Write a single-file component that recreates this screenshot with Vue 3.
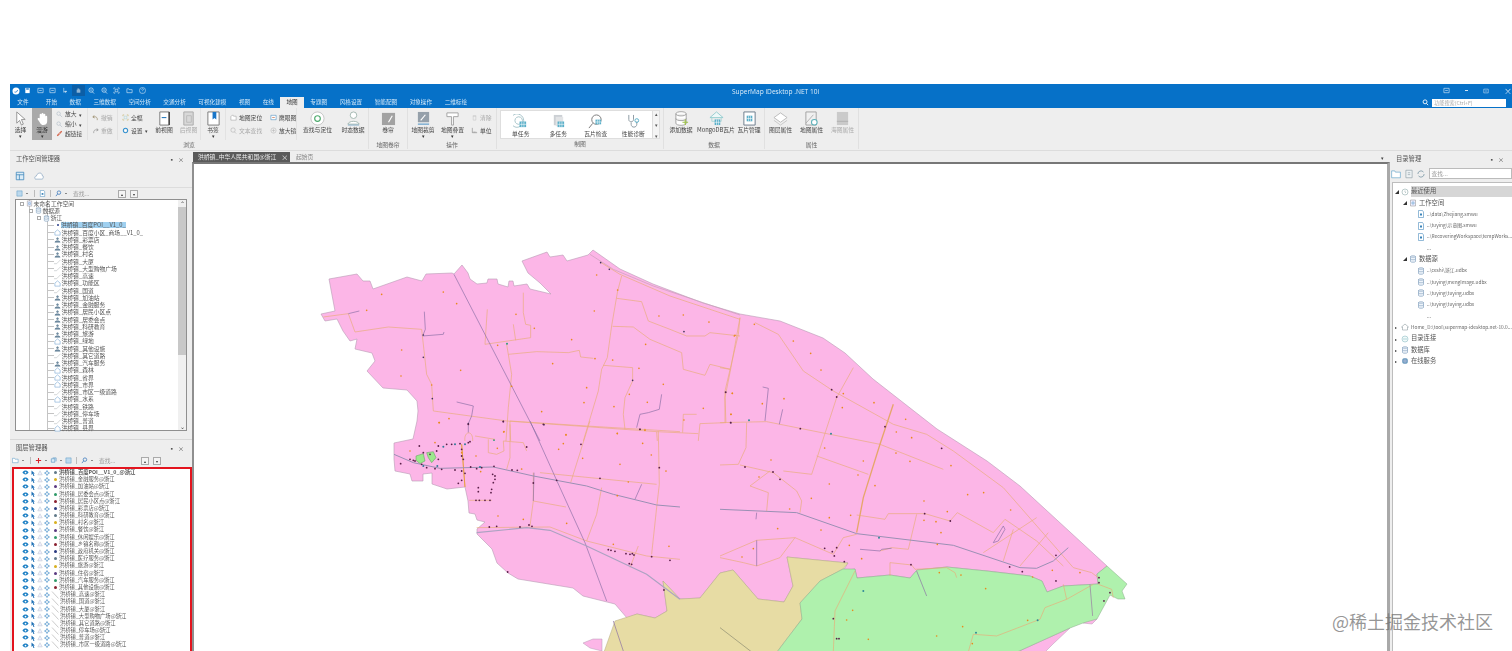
<script setup>
import { h } from 'vue';

const line = (d, stroke = '#777', w = 1, fill = 'none') => ({ d, stroke, 'stroke-width': w, fill });
const solid = (d, fill) => ({ d, fill });
// small teal tile grid used by the map-cache icons
const grid = (x, y, w, hh) => [
  solid(`M${x} ${y}h${w}v${hh}h-${w}z`, '#58aec8'),
  line(`M${x + w / 3} ${y}v${hh}M${x + (2 * w) / 3} ${y}v${hh}M${x} ${y + hh / 2}h${w}`, '#fff', 0.6),
];

// every icon is a short list of paths on a 16x16 grid
const icons = {
  select: [line('M4 1v12l3-3 2 5 2-1-2-5h4z', '#8a8a8a', 0.9, '#fff')],
  hand: [solid('M5 8V4a1 1 0 012 0V3a1 1 0 012 0v1a1 1 0 012 0v2a1 1 0 012 0v5c0 3-2 4-4 4s-3-1-4-3L3 9c-1-1 1-2 2-1z', '#fff')],
  zoomin: [line('M6 2a4 4 0 100 8 4 4 0 000-8zM9 9l5 5', '#9ab')],
  link: [line('M3 13l10-10', '#d0563a', 3), line('M6 10l4-4', '#fff', 1)],
  undo: [line('M5 3L2 7l4 2M2 7c6-2 11 0 10 7', '#8a7a50', 1.4)],
  redo: [line('M11 3l3 4-4 2M14 7C8 5 3 7 4 14', '#777', 1.2)],
  full: [line('M2 5V2h3M11 2h3v3M14 11v3h-3M5 14H2v-3', '#c8b26a', 1.3), line('M5 5h6v6H5z', '#9cc', 1)],
  gear: [line('M8 3a5 5 0 100 10A5 5 0 008 3z', '#2f8fcf', 2.4), solid('M8 6a2 2 0 100 4 2 2 0 000-4z', '#fff')],
  front: [line('M3 1h10v14H3z', '#777', 1, '#fff'), line('M5 7h5', '#2f7fc0', 1.2), line('M13 1v14', '#444', 1.6)],
  back: [line('M3 1h10v14H3z', '#aaa', 1, '#d8d8d8'), line('M6 5h5v7H6z', '#bbb', 1)],
  mark: [line('M2 1h12v14H2z', '#777', 1, '#fff'), solid('M7 1h4v8L9 7.5 7 9z', '#1976c8')],
  locate: [line('M2 6l4-4 2 3h6v9H2z', '#888', 1, '#fff')],
  eagle: [line('M2 3h12v10H2z', '#3a83b8', 1.2, '#fff'), line('M5 8h6', '#c05a30', 1.4)],
  find: [line('M7 2a5 5 0 100 10A5 5 0 007 2zM10 11l4 4', '#aaa', 1.2)],
  lens: [line('M8 2a6 6 0 100 12A6 6 0 008 2zM4 8h8M8 4v8', '#aaa', 1)],
  target: [line('M8 1a7 7 0 100 14A7 7 0 008 1z', '#c4c4c4', 1, '#fff'), line('M8 5a3 3 0 100 6 3 3 0 000-6z', '#4aa86a', 1.2)],
  person: [line('M8 1a3 3 0 100 7 3 3 0 000-7zM2 14c1-4 11-4 12 0z', '#9ab0a8', 0.9, '#fff'), line('M2 15h12', '#7aa8c8', 0.9)],
  curtain: [solid('M1 2h14v13H1z', '#a2a2a2'), line('M8 12l4-7', '#fff', 1.2)],
  clip: [solid('M2 1h12v11H2z', '#95a0aa'), line('M10 4l-5 6', '#fff', 1.2), line('M2 14h12', '#5a9ac8', 1.2)],
  over: [line('M2 2h12v4H9v9H7V6H2z', '#999', 0.9, '#fff')],
  clear: [line('M5 5h6v9H5zM4 4h8', '#bbb', 1)],
  unit: [line('M3 2v11h11', '#777', 1.2), line('M5 13v-3M8 13v-3M11 13v-3', '#777', 0.8)],
  single: [line('M8 1a7 7 0 100 12A7 7 0 008 1zM8 3.500a4 4 0 100 7 4 4 0 000-7z', '#9dbcc2', 0.9), ...grid(7, 8, 7, 6)],
  multi: [solid('M3 1h9v11H3z', '#ccd0d4'), solid('M5 3h8v10H5z', '#e2e4e6'), ...grid(7, 8, 7, 6)],
  check: [line('M9 1a5 5 0 100 10A5 5 0 009 1zM5 10l-4 5', '#777', 1), ...grid(8, 6, 6, 5)],
  pulse: [line('M3 1v5c0 3 5 3 5 0V1M5.500 9v2c0 4 6 4 6 0V8', '#8a98a0', 1), line('M11.500 5a2 2 0 100 4 2 2 0 000-4z', '#58aec8', 1)],
  addd: [line('M2 3c0-3 11-3 11 0v10c0 3-11 3-11 0zM2 3c0 3 11 3 11 0M2 8c0 3 11 3 11 0', '#999', 0.9, '#fff'), line('M12 9v6M9 12h6', '#9cc04a', 1.3)],
  mongo: [line('M8 1l7 6H1z', '#8cc8cc', 0.9, '#eef8f8'), line('M3 7h10v4H3z', '#a4d4d4', 0.9), ...grid(6, 9, 6, 6)],
  tile: [line('M2 1h12v14H2z', '#6a7a8a', 1, '#fff'), ...grid(5, 5, 6, 6)],
  layer: [line('M8 2l7 5-7 5-7-5z', '#b4b4b4', 0.9, '#fff'), line('M1 10l7 5 7-5', '#c4c4c4', 0.9)],
  mapa: [line('M2 1h11v14H2z', '#999', 0.9, '#f0f0f0'), line('M2 13l8-9', '#aaa', 0.9), line('M11 9a3 3 0 100 6 3 3 0 000-6z', '#5ab0b8', 1.1, '#fff')],
  chart: [solid('M2 1h12v14H2z', '#cacaca'), line('M2 11h12', '#b0b0b0', 1)],
  logo: [solid('M8 1a7 7 0 100 14A7 7 0 008 1z', '#fff'), line('M5 10c3 1 6-1 6-4', '#0f6fc6', 1.6)],
  save: [solid('M3 2h10v12H3z', '#fff'), solid('M5 3h6v3H5z', '#0f6fc6')],
  box: [line('M2 3h12v10H2zM5 8h6', '#fff', 1.2)],
  cursor: [line('M4 2v10l3-2 2 4M7 10h4z', '#fff', 1.2)],
  handw: [line('M5 13V6m2 7V3m2 10V4m2 9V6', '#fff', 1.3)],
  zoomw: [line('M7 2a5 5 0 100 10A5 5 0 007 2zM10 11l4 4M5 7h4', '#fff', 1.4)],
  fullw: [line('M2 5V2h3M11 2h3v3M14 11v3h-3M5 14H2v-3M5 5h6v6H5z', '#fff', 1.2)],
  folderw: [line('M2 4h4l1 2h7v7H2z', '#fff', 1.2)],
  help: [line('M8 1a7 7 0 100 14A7 7 0 008 1zM6 6c0-3 5-3 4 0-.5 1.500-2 1.500-2 3M8 11v1', '#fff', 1.1)],
  search: [line('M7 2a4.500 4.500 0 100 9 4.500 4.500 0 000-9zM10 10l4 4', '#fff', 2)],
  table: [line('M2 2h12v12H2zM2 6h12M7 6v8', '#3a83b8', 1.2, '#dcecf6')],
  cloud: [line('M3 13c-3 0-2-5 1-5 0-5 9-7 9-1 3 0 2 6 0 6z', '#7a9ab8', 1, '#fff')],
  open: [line('M1 3h5l1 2h7v8H1z', '#4a90c0', 1.1, '#fff')],
  wsp: [line('M3 2h10v12H3z', '#8a8a8a', 1, '#eef'), line('M6 6h4v4H6z', '#4a90c0', 1)],
  mag: [line('M9 2a4 4 0 100 8 4 4 0 000-8zM6 9l-4 5', '#2a6db8', 1.6)],
  blueb: [line('M2 2h12v12H2z', '#4a90c0', 1, '#bcd9ee')],
  plus: [line('M8 2v12M2 8h12', '#d8232a', 2.4)],
  cube: [line('M3 4h8v8H3zM6 2h8v8', '#3a83b8', 1.2, '#dcecf6')],
  refresh: [line('M3 8a5 5 0 019-3M13 8a5 5 0 01-9 3', '#6a8a9a', 1.1)],
  folder: [line('M1 3h5l1 2h8v9H1z', '#5aa0c8', 1, '#fff')],
  note: [line('M3 2h10v12H3zM6 6h4M6 9h4', '#8a9aa4', 1, '#eef2f4')],
  clock: [line('M8 2a6 6 0 100 12A6 6 0 008 2zM8 5v3l2 2', '#7a9a9a', 1, '#fff')],
  smwu: [line('M3 1h8l2 3v11H3z', '#3a83b8', 1.1, '#fff'), solid('M6 7h4v4H6z', '#3a83b8')],
  db: [line('M3 3c0-2 10-2 10 0v10c0 2-10 2-10 0zM3 3c0 2 10 2 10 0M3 8c0 2 10 2 10 0', '#6a8eb0', 1.1, '#eef4fa')],
  home: [line('M8 2L1 8h2v6h10V8h2z', '#7a8a90', 1, '#fff')],
  chain: [line('M8 2a6 6 0 100 12A6 6 0 008 2z', '#7ab0b8', 1, '#f0fafa'), line('M4 8h8', '#7ab0b8', 1)],
  globe: [solid('M8 2a6 6 0 100 12A6 6 0 008 2z', '#6f9fc0'), line('M8 2v12M2 8h12', '#dce', 0.8)],
  eye: [solid('M1 8c4-6 10-6 14 0-4 6-10 6-14 0z', '#1c7fc4'), solid('M8 6a2 2 0 100 4 2 2 0 000-4z', '#fff')],
  arrow: [solid('M4 1l9 8H9l3 6-3 1-2-6-3 3z', '#1c6fb4')],
  tri: [line('M8 2l6 11H2z', '#b8c0c4', 1.2, '#eef')],
  cog: [line('M8 4a4 4 0 100 8 4 4 0 000-8zM8 0v4M8 12v4M0 8h4M12 8h4', '#2a7fc0', 1.5)],
  region: [line('M8 2l6 5v7H2V7z', '#5a94c8', 1.1, '#fff')],
  lineds: [line('M0 13h6l9-9', '#a0a8ac', 1)],
  ptds: [line('M8 4a2 2 0 100 4 2 2 0 000-4zM2 14c1-4 11-4 12 0z', '#5a7a90', 1.4, '#7a94a8')],
  slash: [line('M2 1l13 14', '#8a8a8a', 0.9)],
};

const Ico = (props) =>
  h('svg', { viewBox: '0 0 16 16', width: props.s, height: props.s, class: 'ico' }, icons[props.n].map((p) => h('path', p)));
Ico.props = ['n', 's'];

const qat = ['save', 'box', 'box', 'cursor', 'handw', 'zoomw', 'zoomw', 'fullw', 'folderw', 'help'];
const tabs = ['开始', '数据', '三维数据', '空间分析', '交通分析', '可视化建模', '视图', '在线', '地图', '专题图', '风格设置', '智能配图', '对象操作', '二维标绘'];

const large = (label, icon, w, extra = {}) => ({ kind: 'large', label, icon, w, ...extra });
const stack = (w, rows, extra = {}) => ({ kind: 'stack', w, rows, ...extra });
const row = (label, icon, gray = false, tail = '') => ({ label, icon, gray, tail });

const groups = [
  {
    name: '浏览', w: 359,
    items: [
      large('选择', 'select', 21, { arrow: true }),
      large('漫游', 'hand', 20, { on: true, arrow: true }),
      stack(36, [row('放大', 'zoomin', false, '▾'), row('缩小', 'zoomin', false, '▾'), row('超链接', 'link')], { line: true }),
      stack(30, [row('撤销', 'undo', true), row('重做', 'redo', true)], { line: true }),
      stack(33, [row('全幅', 'full'), row('设置', 'gear', false, '▾')]),
      large('前视图', 'front', 26),
      large('后视图', 'back', 24, { gray: true, line: true }),
      large('书签', 'mark', 25, { arrow: true, line: true }),
      stack(40, [row('地图定位', 'locate'), row('文本查找', 'find', true)]),
      stack(31, [row('鹰眼图', 'eagle'), row('放大镜', 'lens')], { line: true }),
      large('查找与定位', 'target', 41),
      large('时态数据', 'person', 30),
    ],
  },
  { name: '地图卷帘', w: 39, items: [large('卷帘', 'curtain', 38)] },
  {
    name: '操作', w: 89,
    items: [
      large('地图裁剪', 'clip', 30, { arrow: true }),
      large('地图叠置', 'over', 29, { arrow: true }),
      stack(29, [row('清除', 'clear', true), row('单位', 'unit')]),
    ],
  },
  { name: '数据', w: 101, at: 'late', items: [large('添加数据', 'addd', 34), large('MongoDB瓦片', 'mongo', 36), large('瓦片管理', 'tile', 30)] },
  { name: '属性', w: 94, at: 'late', items: [large('图层属性', 'layer', 31), large('地图属性', 'mapa', 31), large('海图属性', 'chart', 31, { gray: true })] },
];
const earlyGroups = groups.filter((g) => !g.at);
const lateGroups = groups.filter((g) => g.at);
const gallery = [
  { label: '单任务', icon: 'single' },
  { label: '多任务', icon: 'multi' },
  { label: '瓦片检查', icon: 'check' },
  { label: '性能诊断', icon: 'pulse' },
];

const P = 'ptds';
const R = 'region';
const L = 'lineds';
const datasets = [
  ['百度POI__V1_0_', 'dot'], ['百度小区_商场__V1_0_', R], ['彩票店', P], ['餐饮', P], ['村名', P], ['大厦', L],
  ['大型购物广场', L], ['高速', L], ['功能区', R], ['国道', L], ['加油站', P], ['金融服务', P], ['居民小区点', P],
  ['居委会点', P], ['科研教育', P], ['旅游', P], ['绿地', R], ['其他设施', P], ['其它道路', L], ['汽车服务', P],
  ['森林', R], ['省界', R], ['市界', R], ['市区一级道路', L], ['水系', R], ['铁路', L], ['停车场', L], ['普道', L], ['县界', R],
];

const y = '#d8b020';
const v = '#5a3a80';
const g = '#2f9a68';
const r = '#8a2030';
const n = '#2a3a80';
const s = '#607888';
const layers = [
  ['百度POI__V1_0_', s], ['金融服务', y], ['加油站', v], ['居委会点', g], ['居民小区点', r], ['彩票店', n], ['科研教育', s],
  ['村名', y], ['餐饮', v], ['休闲娱乐', g], ['乡镇名称', r], ['政府机关', n], ['医疗服务', s], ['旅游', y], ['住宿', v],
  ['汽车服务', g], ['其他设施', r], ['高速', ''], ['国道', ''], ['大厦', ''], ['大型购物广场', ''], ['其它道路', ''],
  ['停车场', ''], ['普道', ''], ['市区一级道路', ''],
];

const catalog = [
  { text: '最近使用', icon: 'clock', lv: 'l0', open: true, sel: true, big: true },
  { text: '工作空间', icon: 'wsp', lv: 'l1', open: true, big: true },
  { text: '..\\data\\Zhejiang.smwu', icon: 'smwu', lv: 'l2' },
  { text: '..\\tuying\\示意图.smwu', icon: 'smwu', lv: 'l2' },
  { text: '..\\RecoveringWorkspace\\tempWorks...', icon: 'smwu', lv: 'l2' },
  { text: '...', lv: 'l3' },
  { text: '数据源', icon: 'db', lv: 'l1', open: true, big: true },
  { text: '..\\ceshi\\浙江.udbx', icon: 'db', lv: 'l2' },
  { text: '..\\tuying\\mengImage.udbx', icon: 'db', lv: 'l2' },
  { text: '..\\tuying\\tuying.udbx', icon: 'db', lv: 'l2' },
  { text: '..\\tuying\\tuying.udbx', icon: 'db', lv: 'l2' },
  { text: '...', lv: 'l3' },
  { text: 'Home_D:\\tool\\supermap-idesktop.net-10.0...', icon: 'home', lv: 'l0', shut: true },
  { text: '目录连接', icon: 'chain', lv: 'l0', shut: true, big: true },
  { text: '数据库', icon: 'db', lv: 'l0', shut: true, big: true },
  { text: '在线服务', icon: 'globe', lv: 'l0', shut: true, big: true },
];

// map geometry, in page pixels
const pink = '329,278 357,273 363,280 370,280 373,288 407,276 422,280 426,273 452,272 454,273 462,264 468,272 470,278 477,283 487,282 488,278 497,278 498,283 508,286 509,280 513,280 514,285 527,283 530,288 551,293 540,282 528,272 522,260 547,251 550,256 563,254 567,260 588,254 593,249 620,268 653,283 703,302 740,313 780,320 823,337 845,352 873,378 937,428 987,460 1020,485 1107,565 1097,573 1098,583 1063,585 1047,591 1042,580 1030,575 987,570 947,566 917,569 910,577 890,574 857,577 855,568 843,570 848,562 787,556 793,585 784,601 758,598 733,569 720,572 712,582 700,597 680,598 663,580 667,610 655,617 637,613 627,617 615,603 583,595 573,587 518,578 508,572 497,562 492,548 477,533 477,528 485,521 477,519 475,513 469,512 468,500 465,486 447,488 432,483 432,472 423,473 423,480 412,480 410,473 395,470 394,458 394,442 413,438 417,420 418,410 417,400 407,389 383,387 367,370 375,360 372,352 355,348 357,338 350,340 343,330 337,318 325,320 321,313 335,310';
const pinkBits = [
  '583,642 593,638 602,638 602,650 590,647',
  '720,577 730,579 723,605 710,605',
  '1017,651 1070,627 1053,643 1045,651',
  '1093,615 1097,618 1092,623 1083,622',
  '802,618 793,640 785,643',
];
const yellow = '787,556 793,585 784,601 758,598 733,569 720,572 712,582 700,597 680,598 663,580 667,610 655,617 637,613 615,620 604,651 777,651 783,643 802,618 800,602 820,580 843,568 848,562';
const green = '843,568 855,568 857,577 890,574 910,577 917,569 947,566 987,570 1030,575 1042,580 1047,591 1063,585 1098,583 1097,573 1107,565 1127,583 1122,590 1125,598 1118,598 1110,594 1097,618 1083,622 1070,627 1017,651 777,651 783,643 802,618 800,602 820,580';

const topRoads = 'M10,228L85,218 105,273 205,258 305,265 320,400 335,430 340,510 560,540 1010,572 1135,578M905,105L893,150 875,255 862,350 845,385 835,450 790,600M890,172L965,182 985,240 1050,265 1100,285 1155,285 1170,275 1260,285M878,256L940,258 990,295 1085,335 1090,385 1155,403 1170,370 1232,385M1260,230L1232,385 1215,470 1218,545 1140,548 1135,600M850,373L938,380 938,420 915,470 910,520 915,565M565,340L650,332 745,335 778,328 782,348 820,352M560,310L575,400 565,500 558,600M610,155L610,215 617,250 632,253 632,290 495,310 502,205M580,250L587,298M1090,520L1130,520M1090,520L1088,575M1010,572L1012,600M570,550L572,600M840,63L900,100 1050,165 1260,235';
const topPurple = 'M85,218L118,210M313,212L316,265 308,285 370,280 372,273M410,483L460,495 455,525 445,548 445,575M1025,460L1018,505 985,515 960,520 950,560M402,100L660,600';
const topDark = [[842, 65], [868, 85], [310, 282], [310, 349], [337, 473], [445, 548], [550, 541], [672, 551], [938, 418], [960, 565], [1217, 453], [1233, 545], [1092, 272]];
const topOrange = [[185, 160], [370, 153], [410, 188], [140, 208], [245, 327], [243, 405], [422, 388], [588, 220], [643, 262], [533, 313], [575, 436], [698, 368], [755, 296], [823, 210], [830, 102], [893, 147], [825, 353], [878, 357], [957, 382], [977, 310], [1017, 225], [1090, 222], [1167, 243], [1243, 285], [1030, 430], [800, 440], [792, 485], [882, 497], [928, 460], [982, 484], [1150, 502], [1092, 537], [1233, 520], [1237, 457], [665, 512], [357, 545], [387, 533], [551, 573], [738, 581], [892, 577], [975, 566], [335, 432]];
const topTeal = [[561, 308], [522, 597]];

const midRoads = 'M268,238L335,238M245,70L255,198M390,0L390,110 380,145M390,0L620,15 900,32M480,155L830,190M460,155L460,240 450,315M460,240L558,258M630,0L572,185M665,200L650,280 620,360M835,30L838,190 830,260 815,400M290,320L510,318 620,360 800,405 900,415M775,375L750,440M325,55L325,95 350,100 372,90 370,60 430,65 440,90M285,45L345,55M255,60C250,30 280,25 278,60';
const midPurple = 'M462,155L460,240M785,190L765,235M700,600L730,690M450,0L530,178 615,365 680,540';
const midDark = [[62, 128], [90, 115], [118, 75], [175, 75], [200, 70], [215, 70], [240, 68], [265, 65], [270, 62], [245, 85], [245, 105], [250, 115], [170, 90], [175, 115], [140, 140], [165, 143], [185, 145], [225, 147], [272, 138], [290, 143], [305, 140], [342, 136], [396, 147], [412, 148], [245, 150], [255, 157], [245, 178], [235, 187], [295, 200], [295, 212], [288, 238], [298, 238], [315, 238], [330, 238], [333, 215], [335, 205], [340, 185], [345, 175], [345, 165], [338, 160], [460, 186], [440, 78], [603, 70], [530, 178], [660, 172], [838, 140], [328, 318], [350, 316], [420, 318], [447, 312], [456, 316], [685, 386], [693, 388], [705, 391], [738, 398], [750, 400], [757, 398], [762, 402], [815, 407], [870, 418], [748, 428], [755, 430], [383, 453], [852, 507], [265, 10], [370, 2], [490, 10], [780, 25], [150, 100], [130, 95], [105, 120], [125, 130], [100, 118]];
const midOrange = [[178, 5], [372, 32], [352, 82], [288, 105], [165, 65], [90, 90], [558, 42], [550, 68], [536, 85], [608, 112], [712, 38], [788, 67], [814, 102], [720, 130], [858, 150], [745, 183], [712, 224], [700, 370], [867, 376], [560, 307], [430, 295], [354, 285], [795, 28], [425, 144], [245, 95], [302, 152]];
const midTeal = [[190, 77], [225, 70], [255, 70], [300, 138], [172, 135], [130, 135]];

const lowRoads = 'M60,80L55,130 15,300 15,395M0,230L30,235M0,395L140,392 480,460 670,535M105,95L175,130 250,240 340,300 520,400 620,430 700,480 850,590 1060,830 1115,845 1135,860M400,230L350,320 275,550 190,540M290,495L445,550M80,395L78,470 55,520 0,522M60,522L160,545 230,600 245,630 240,665M150,540L90,585 145,605 140,660M410,672L495,685 505,668 615,668 690,690 712,665 820,725 855,685 950,750 1030,825M590,670L565,775 515,770 480,780M0,795L110,748 225,740 340,790M110,825L180,800 225,740M0,800L70,815 110,825M410,730L370,740 340,790M950,680L790,785M985,725L900,825M880,715L850,810M405,840L345,960 340,1083M1040,925L1030,880M1120,880L1040,925 975,950 960,985 830,1035 760,1030 745,1083M510,855L510,815 575,822 585,835 680,830 705,845 710,860M1135,880L1175,895 1180,920';
const lowWide = 'M520,340L480,460 430,620 410,725';
const lowPurple = 'M128,288L145,292 135,390M188,355L178,400M820,755L850,705 855,715 835,750ZM420,775L480,780 485,775 515,772M110,665L108,685M110,748L110,825M590,840L620,915';
const lowDark = [[335, 296], [350, 318], [17, 304], [32, 395], [241, 413], [75, 528], [159, 543], [180, 565], [495, 407], [665, 472], [614, 668], [691, 690], [573, 821], [314, 772], [337, 782], [350, 770], [343, 795], [373, 812], [1008, 793], [1008, 870], [907, 842], [869, 828], [1137, 860], [1137, 875], [1170, 905], [1152, 930], [340, 983], [350, 1043], [357, 1043]];
const lowOrange = [[103, 100], [45, 133], [220, 150], [272, 187], [303, 237], [192, 323], [127, 338], [37, 307], [33, 370], [370, 308], [367, 350], [462, 335], [557, 385], [529, 423], [575, 440], [528, 486], [570, 511], [430, 510], [314, 471], [414, 552], [328, 579], [153, 507], [117, 558], [274, 622], [209, 654], [328, 680], [392, 673], [303, 717], [173, 713], [100, 773], [66, 798], [388, 763], [425, 803], [465, 584], [612, 630], [612, 688], [648, 692], [682, 662], [663, 725], [652, 760], [743, 611], [791, 605], [693, 524], [872, 657], [997, 838], [938, 858], [1080, 845], [658, 845], [723, 852], [797, 893], [398, 958], [380, 987], [445, 1045], [728, 1007], [650, 1035], [757, 1058], [923, 988]];
const lowTeal = [[87, 388], [333, 428], [477, 740], [430, 900], [768, 1025], [953, 988]];
</script>

<template>
  <div class="page">
    <div class="window">
      <div class="titlebar">
        <div class="qat">
          <Ico n="logo" :s="8" class="logo" />
          <span v-for="(q, i) in qat" :key="i" class="qat-btn" :class="{ dim: i === 4 }"><Ico :n="q" :s="7" /></span>
        </div>
        <div class="app-title">SuperMap iDesktop .NET 10i</div>
        <div class="win-btns">
          <Ico n="box" :s="7" />
          <span class="minus"></span>
          <Ico n="box" :s="6" />
          <span class="close">×</span>
        </div>
      </div>

      <div class="tabs">
        <span class="tab file">文件</span>
        <span v-for="t in tabs" :key="t" class="tab" :class="{ active: t === '地图' }">{{ t }}</span>
        <div class="func-search">
          <Ico n="search" :s="7" />
          <span class="func-input">功能搜索(Ctrl+F)</span>
        </div>
      </div>

      <div class="ribbon">
        <div v-for="grp in earlyGroups" :key="grp.name" class="group" :style="{ width: grp.w + 'px' }">
          <div class="group-items">
            <template v-for="(it, i) in grp.items" :key="i">
              <div v-if="it.kind === 'large'" class="large" :class="{ on: it.on, gray: it.gray, line: it.line }" :style="{ width: it.w + 'px' }">
                <Ico :n="it.icon" :s="15" />
                <span class="large-label">{{ it.label }}</span>
                <span v-if="it.arrow" class="drop">▾</span>
              </div>
              <div v-else class="stack" :class="{ line: it.line }" :style="{ width: it.w + 'px' }">
                <div v-for="rw in it.rows" :key="rw.label" class="small" :class="{ gray: rw.gray }">
                  <Ico :n="rw.icon" :s="7" />
                  <span>{{ rw.label }}</span>
                  <span v-if="rw.tail" class="tail">{{ rw.tail }}</span>
                </div>
              </div>
            </template>
          </div>
          <div class="group-name">{{ grp.name }}</div>
        </div>

        <div class="group gallery-group">
          <div class="gallery">
            <div v-for="gi in gallery" :key="gi.label" class="gallery-item">
              <Ico :n="gi.icon" :s="15" />
              <span>{{ gi.label }}</span>
            </div>
            <div class="gallery-scroll"><i>▴</i><i>▾</i><i>▾</i></div>
          </div>
          <div class="group-name">制图</div>
        </div>

        <div v-for="grp in lateGroups" :key="grp.name" class="group" :style="{ width: grp.w + 'px' }">
          <div class="group-items">
            <div v-for="it in grp.items" :key="it.label" class="large" :class="{ gray: it.gray }" :style="{ width: it.w + 'px' }">
              <Ico :n="it.icon" :s="15" />
              <span class="large-label">{{ it.label }}</span>
            </div>
          </div>
          <div class="group-name">{{ grp.name }}</div>
        </div>
      </div>

      <div class="workspace">
        <div class="left-col">
          <section class="panel ws-panel">
            <div class="panel-head"><span>工作空间管理器</span><span class="pin">▪ ×</span></div>
            <div class="subtabs"><Ico n="table" :s="10" /><Ico n="cloud" :s="10" /></div>
            <div class="toolbar ws-bar">
              <Ico n="blueb" :s="7" /><i class="tb-drop">▪</i><b class="tb-sep"></b>
              <Ico n="smwu" :s="7" /><b class="tb-sep"></b>
              <Ico n="mag" :s="7" /><i class="tb-drop">▪</i>
              <span class="find-text">查找...</span>
              <span class="nav first">▴</span><span class="nav">▾</span>
            </div>
            <div class="tree">
              <div class="tree-rows">
                <div class="row r0"><i class="minus-box"></i><Ico n="wsp" :s="7" /><span>未命名工作空间</span></div>
                <div class="row r1"><i class="minus-box"></i><Ico n="db" :s="7" /><span>数据源</span></div>
                <div class="row r2"><i class="minus-box"></i><Ico n="db" :s="7" /><span>浙江</span></div>
                <div v-for="(d, i) in datasets" :key="d[0]" class="row r3">
                  <i v-if="d[1] === 'dot'" class="sel-dot"></i>
                  <Ico v-else :n="d[1]" :s="7" />
                  <span :class="{ picked: i === 0 }">洪桥镇_{{ d[0] }}</span>
                </div>
              </div>
              <div class="scroll">
                <span class="scroll-btn">⌃</span>
                <div class="thumb"></div>
                <span class="scroll-btn end">⌄</span>
              </div>
            </div>
          </section>

          <section class="panel layer-panel">
            <div class="panel-head"><span>图层管理器</span><span class="pin">▪ ×</span></div>
            <div class="toolbar layer-bar">
              <Ico n="open" :s="7" /><i class="tb-drop">▪</i><b class="tb-sep"></b>
              <Ico n="plus" :s="7" /><i class="tb-drop">▪</i>
              <Ico n="cube" :s="7" /><i class="tb-drop">▪</i>
              <Ico n="blueb" :s="7" /><b class="tb-sep"></b>
              <Ico n="mag" :s="7" /><i class="tb-drop">▪</i>
              <span class="find-text">查找...</span>
              <span class="nav first">▴</span><span class="nav">▾</span>
            </div>
            <div class="layer-list">
              <div v-for="(l, i) in layers" :key="l[0]" class="layer-row">
                <Ico n="eye" :s="7" />
                <Ico n="arrow" :s="6" />
                <Ico n="tri" :s="6" />
                <Ico n="cog" :s="6" />
                <i v-if="l[1]" class="pt" :style="{ background: l[1] }"></i>
                <Ico v-else n="slash" :s="8" class="ln" />
                <span :class="{ strong: i === 0 }">洪桥镇_{{ l[0] }}@浙江</span>
              </div>
            </div>
          </section>
        </div>

        <div class="doc-col">
          <div class="doc-tabs">
            <span class="doc-tab">洪桥镇_中华人民共和国@浙江<em>×</em></span>
            <span class="doc-tab2">起始页</span>
            <span class="doc-menu">▾</span>
          </div>
          <div class="map">
            <svg class="map-svg" width="1193" height="488" viewBox="194 163 1193 488">
              <polygon :points="pink" fill="#fcb6e7" stroke="#b79ab4" stroke-width=".6" />
              <polygon v-for="b in pinkBits" :key="b" :points="b" fill="#fcb6e7" stroke="#b79ab4" stroke-width=".5" />
              <polygon :points="yellow" fill="#e7dca4" stroke="#b4aa80" stroke-width=".5" />
              <polygon :points="green" fill="#aff1ad" stroke="#8aaa8a" stroke-width=".5" />

              <g fill="none" transform="translate(320 240) scale(.3333)">
                <path d="M810,40L880,85 1000,135 1260,222" stroke="#c8a0b8" stroke-width="2" />
                <path :d="topRoads" stroke="#e8ac78" stroke-width="2" />
                <path :d="topPurple" stroke="#8a6ea4" stroke-width="2" />
                <circle v-for="p in topOrange" :key="p.join()" :cx="p[0]" :cy="p[1]" r="2.500" fill="#e88a1a" />
                <circle v-for="p in topDark" :key="p.join()" :cx="p[0]" :cy="p[1]" r="2.500" fill="#40305a" />
                <circle v-for="p in topTeal" :key="p.join()" :cx="p[0]" :cy="p[1]" r="3" fill="#2f9a78" />
              </g>

              <g fill="none" transform="translate(380 420) scale(.3333)">
                <path d="M108,105L130,98 135,120 120,128 108,118ZM140,95L160,92 168,110 155,125 145,110Z" fill="#9ce88c" stroke="#5a9a5a" stroke-width="1.500" />
                <path :d="midRoads" stroke="#e8ac78" stroke-width="2" />
                <path d="M245,70L255,198" stroke="#e6a040" stroke-width="3" />
                <path :d="midPurple" stroke="#8a6ea4" stroke-width="2" />
                <path d="M42,100L100,125 180,142 340,138 460,165 620,195 700,220 830,252 900,258" stroke="#9a90b4" stroke-width="3" />
                <path d="M290,335L440,320 510,328 620,375 800,460 900,535" stroke="#aca2c2" stroke-width="3.500" />
                <circle v-for="p in midOrange" :key="p.join()" :cx="p[0]" :cy="p[1]" r="2.500" fill="#e88a1a" />
                <circle v-for="p in midDark" :key="p.join()" :cx="p[0]" :cy="p[1]" r="2.700" fill="#5a1f48" />
                <circle v-for="p in midTeal" :key="p.join()" :cx="p[0]" :cy="p[1]" r="3" fill="#2f7a98" />
              </g>

              <g fill="none" transform="translate(720 290) scale(.3333)">
                <path :d="lowRoads" stroke="#e8ac78" stroke-width="2" />
                <path :d="lowWide" stroke="#e6a66a" stroke-width="4" />
                <path :d="lowPurple" stroke="#8a6ea4" stroke-width="2" />
                <path d="M0,1010L95,1083" stroke="#8a8a70" stroke-width="2" />
                <path d="M0,655L230,665 410,728 700,763 900,830 950,832 1000,810 1045,770" stroke="#9a90b4" stroke-width="3" />
                <path d="M1110,880L1118,975" stroke="#a0a0a6" stroke-width="3" />
                <circle v-for="p in lowOrange" :key="p.join()" :cx="p[0]" :cy="p[1]" r="2.500" fill="#e88a1a" />
                <circle v-for="p in lowDark" :key="p.join()" :cx="p[0]" :cy="p[1]" r="2.700" fill="#5a1f48" />
                <circle v-for="p in lowTeal" :key="p.join()" :cx="p[0]" :cy="p[1]" r="3" fill="#2f8a98" />
              </g>
            </svg>
          </div>
        </div>

        <section class="panel right-panel">
          <div class="panel-head"><span>目录管理</span><span class="pin">▪ ×</span></div>
          <div class="cat-bar">
            <Ico n="folder" :s="10" />
            <Ico n="note" :s="10" />
            <Ico n="refresh" :s="10" />
            <span class="cat-find">查找...</span>
          </div>
          <div class="catalog">
            <div v-for="(c, i) in catalog" :key="i" class="cat-row" :class="c.lv">
              <i class="caret">{{ c.open ? '◢' : c.shut ? '▸' : '' }}</i>
              <Ico v-if="c.icon" :n="c.icon" :s="8" />
              <span :class="{ selected: c.sel, big: c.big }">{{ c.text }}</span>
            </div>
          </div>
        </section>
      </div>
    </div>
    <div class="watermark">@稀土掘金技术社区</div>
  </div>
</template>

<style scoped>
.page {
  position: relative;
  width: 1512px;
  height: 651px;
  overflow: hidden;
  padding: 84px 0 0 10px;
  box-sizing: border-box;
  background: #fff;
  font-family: "Noto Sans CJK SC", "Liberation Sans", sans-serif;
  color: #444;
  font-size: 5.8px;
  line-height: 1;
}
.window {
  width: 1502px;
  height: 567px;
  display: flex;
  flex-direction: column;
  filter: blur(0.25px);
}
.ico {
  display: block;
  flex: none;
}

/* title bar */
.titlebar {
  height: 13px;
  background: #0671c8;
  display: flex;
  align-items: center;
  position: relative;
  color: #fff;
}
.qat {
  display: flex;
  align-items: center;
  padding-left: 2px;
}
.logo {
  margin-right: 1px;
}
.qat-btn {
  width: 12.800px;
  height: 11px;
  display: flex;
  align-items: center;
  justify-content: center;
}
.qat-btn.dim {
  background: #0c5ea6;
}
.app-title {
  position: absolute;
  left: 722px;
  top: 3px;
  font: 6.600px "Open Sans", "Liberation Sans", sans-serif;
  color: #dcecf8;
}
.win-btns {
  margin-left: auto;
  display: flex;
  align-items: center;
  gap: 15px;
  width: 69px;
  color: #cfe4f5;
}
.minus {
  width: 5px;
  height: 1px;
  background: #cfe4f5;
}
.close {
  font-size: 8px;
}

/* tabs */
.tabs {
  height: 11px;
  background: #0671c8;
  display: flex;
  padding-left: 1px;
  color: #d4e8f8;
  align-items: stretch;
}
.tab {
  padding: 0 6.300px;
  display: flex;
  align-items: center;
  font-size: 5.600px;
}
.tab.file {
  padding-right: 11px;
}
.tab.active {
  background: #eeeeee;
  color: #333;
}
.func-search {
  margin-left: auto;
  display: flex;
  align-items: center;
  gap: 3px;
  padding-right: 6px;
}
.func-input {
  width: 74px;
  height: 8px;
  background: #fff;
  color: #aaa;
  font-size: 5.200px;
  display: flex;
  align-items: center;
  padding-left: 2px;
  box-sizing: border-box;
}

/* ribbon */
.ribbon {
  height: 43px;
  background: #eeeeee;
  display: flex;
  flex: none;
  border-bottom: 1px solid #dcdcdc;
  box-sizing: border-box;
}
.group {
  flex: none;
  height: 41px;
  display: flex;
  flex-direction: column;
  border-right: 1px solid #e0e0e0;
  box-sizing: border-box;
}
.group-items {
  display: flex;
  height: 32px;
}
.group-name {
  text-align: center;
  margin-top: 1px;
  color: #666;
  height: 7px;
  line-height: 7px;
}
.large {
  flex: none;
  display: flex;
  flex-direction: column;
  align-items: center;
  padding-top: 3px;
  box-sizing: border-box;
  position: relative;
}
.large-label {
  margin-top: 0.500px;
  white-space: nowrap;
}
.large.on {
  background: #a9a9a9;
  margin: 0 0 0 1px;
  color: #333;
}
.large.gray,
.small.gray {
  color: #aaa;
}
.line {
  border-right: 1px solid #e2e2e2;
}
.drop {
  font-size: 5px;
  margin-top: 1px;
  color: #333;
}
.stack {
  flex: none;
  display: flex;
  flex-direction: column;
  justify-content: space-evenly;
  padding-left: 4px;
  box-sizing: border-box;
}
.small {
  display: flex;
  align-items: center;
  gap: 2px;
  white-space: nowrap;
}
.tail {
  font-size: 5px;
}
.gallery-group {
  width: 167px;
}
.gallery {
  margin: 2px 3px 0;
  height: 29px;
  background: #fff;
  border: 1px solid #dedede;
  box-sizing: border-box;
  display: flex;
  padding-left: 1px;
}
.gallery-item {
  width: 38px;
  display: flex;
  flex-direction: column;
  align-items: center;
  padding-top: 3px;
  gap: 2px;
  box-sizing: border-box;
  white-space: nowrap;
}
.gallery-scroll {
  margin-left: auto;
  width: 6px;
  display: flex;
  flex-direction: column;
  justify-content: space-between;
  background: #f4f4f4;
  border-left: 1px solid #ddd;
  font-size: 5px;
  color: #555;
  align-items: center;
}
.gallery-scroll i {
  font-style: normal;
}

/* panels */
.workspace {
  display: flex;
  flex: 1;
  min-height: 0;
  background: #eeeeee;
}
.left-col {
  width: 182px;
  flex: none;
  display: flex;
  flex-direction: column;
}
.panel {
  background: #eeeeee;
  box-sizing: border-box;
  display: flex;
  flex-direction: column;
}
.ws-panel {
  height: 289px;
  border-bottom: 1px solid #d8d8d8;
}
.layer-panel {
  flex: 1;
  min-height: 0;
}
.panel-head {
  height: 14px;
  flex: none;
  display: flex;
  align-items: center;
  justify-content: space-between;
  padding: 3px 7px 0 6px;
  box-sizing: border-box;
  font-size: 6.300px;
  color: #555;
}
.pin {
  font-size: 6px;
  letter-spacing: 1px;
}
.subtabs {
  height: 23px;
  padding-left: 5px;
  display: flex;
  align-items: center;
  gap: 9px;
  flex: none;
  border-bottom: 1px solid #dcdcdc;
  box-sizing: border-box;
}
.toolbar {
  display: flex;
  align-items: center;
  flex: none;
  height: 11px;
  gap: 1px;
  color: #888;
}
.ws-bar {
  padding-left: 6px;
}
.layer-bar {
  height: 13px;
  padding-left: 2px;
}
.tb-drop {
  font-size: 4px;
  font-style: normal;
  width: 6px;
  text-align: center;
  color: #333;
}
.tb-sep {
  width: 1px;
  height: 7px;
  background: #bbb;
  margin: 0 3px;
}
.find-text {
  margin-left: 3px;
  width: 38px;
  color: #999;
}
.nav {
  width: 6px;
  height: 6px;
  border: 1px solid #aaa;
  background: #f4f4f4;
  font-size: 4px;
  display: flex;
  align-items: center;
  justify-content: center;
  margin-left: 3px;
  color: #333;
}
.ws-bar .find-text {
  width: 41px;
}
.tree {
  height: 232px;
  margin: 0 5px;
  border: 1px solid #8f8f8f;
  background:
    linear-gradient(#c4c4c4, #c4c4c4) 13px 0 / 1px 100% no-repeat,
    linear-gradient(#c4c4c4, #c4c4c4) 31px 0 / 1px 100% no-repeat,
    #fff;
  display: flex;
  box-sizing: border-box;
}
.tree-rows {
  flex: 1;
  min-width: 0;
  padding-top: 0;
  height: 230px;
}
.row {
  height: 7.250px;
  display: flex;
  align-items: center;
  white-space: nowrap;
  color: #555;
}
.row .ico {
  margin-right: 0.500px;
}
.r0 {
  padding-left: 4px;
}
.r1 {
  padding-left: 13px;
}
.r2 {
  padding-left: 21px;
}
.r3 {
  padding-left: 31px;
}
.r3::before {
  content: "";
  width: 7px;
  height: 1px;
  background: #c4c4c4;
  flex: none;
}
.minus-box {
  width: 4px;
  height: 4px;
  border: 1px solid #aaa;
  background: #fff;
  box-sizing: border-box;
  margin-right: 2px;
}
.sel-dot {
  width: 7px;
  display: flex;
  justify-content: center;
  flex: none;
}
.sel-dot::after {
  content: "";
  width: 2px;
  height: 2px;
  background: #2b3f8a;
  border-radius: 50%;
}
.picked {
  background: #9fd0f0;
}
.scroll {
  width: 8px;
  background: #f0f0f0;
  display: flex;
  flex-direction: column;
  align-items: center;
  font-size: 6px;
  color: #444;
  flex: none;
}
.scroll-btn {
  height: 7px;
  line-height: 8px;
}
.scroll-btn.end {
  margin-top: auto;
}
.thumb {
  width: 100%;
  height: 148px;
  background: #c8c8c8;
}
.layer-list {
  flex: 1;
  margin: 0 0 0 2px;
  width: 180px;
  border: 2px solid #e3141e;
  border-bottom: 0;
  box-sizing: border-box;
  background: #fff;
  overflow: hidden;
}
.layer-row {
  height: 7.200px;
  display: flex;
  align-items: center;
  padding-left: 8px;
  gap: 1px;
  white-space: nowrap;
  color: #555;
  font-size: 5.300px;
}
.layer-row .ico {
  flex: none;
}
.pt {
  width: 3px;
  height: 3px;
  border-radius: 50%;
  margin: 0 1px 0 3px;
  flex: none;
}
.strong {
  font-weight: 700;
}

/* document area */
.doc-col {
  width: 1198px;
  flex: none;
  display: flex;
  flex-direction: column;
}
.doc-tabs {
  height: 10px;
  flex: none;
  display: flex;
  align-items: stretch;
  padding-left: 1px;
  margin-top: 1px;
}
.doc-tab {
  width: 97px;
  background: #5a5a5a;
  color: #eee;
  display: flex;
  align-items: center;
  padding-left: 5px;
  box-sizing: border-box;
  white-space: nowrap;
}
.doc-tab em {
  font-style: normal;
  margin-left: 5px;
  font-size: 7px;
}
.doc-tab2 {
  margin-left: 6px;
  display: flex;
  align-items: center;
  color: #888;
}
.doc-menu {
  margin-left: auto;
  margin-right: 6px;
  font-size: 5px;
  align-self: center;
}
.map {
  flex: 1;
  min-height: 0;
  background: #fff;
  border-top: 2px solid #777;
  border-left: 2px solid #8f8f8f;
  border-right: 3px solid #a9a9a9;
  overflow: hidden;
}
.map-svg {
  display: block;
}

/* catalog */
.right-panel {
  flex: 1;
  min-width: 0;
}
.cat-bar {
  height: 17px;
  flex: none;
  display: flex;
  align-items: center;
  gap: 2.500px;
  padding-left: 1px;
}
.cat-find {
  flex: 1;
  height: 11px;
  background: #fff;
  border: 1px solid #bbb;
  box-sizing: border-box;
  display: flex;
  align-items: center;
  padding-left: 2px;
  color: #999;
}
.catalog {
  flex: 1;
  background: #fff;
  margin-left: 2px;
  border-left: 1px solid #bdbdbd;
  border-top: 1px solid #bdbdbd;
  padding-top: 3px;
  overflow: hidden;
}
.cat-row {
  height: 11.300px;
  display: flex;
  align-items: center;
  gap: 2px;
  white-space: nowrap;
  color: #666;
  font-size: 4.800px;
}
.caret {
  font-style: normal;
  width: 4px;
  font-size: 4px;
  color: #333;
  flex: none;
}
.l0 {
  padding-left: 2px;
}
.l1 {
  padding-left: 10px;
}
.l2 {
  padding-left: 18px;
}
.l3 {
  padding-left: 28px;
}
.big {
  font-size: 6.300px;
  color: #555;
}
.selected {
  background: #d6d6d6;
  flex: 1;
  height: 11px;
  display: flex;
  align-items: center;
}

.watermark {
  position: absolute;
  left: 1332px;
  top: 611px;
  font-size: 18px;
  line-height: 20px;
  color: rgba(110, 110, 110, 0.72);
  white-space: nowrap;
}
</style>

<style>
html,
body {
  margin: 0;
  background: #fff;
}
</style>
